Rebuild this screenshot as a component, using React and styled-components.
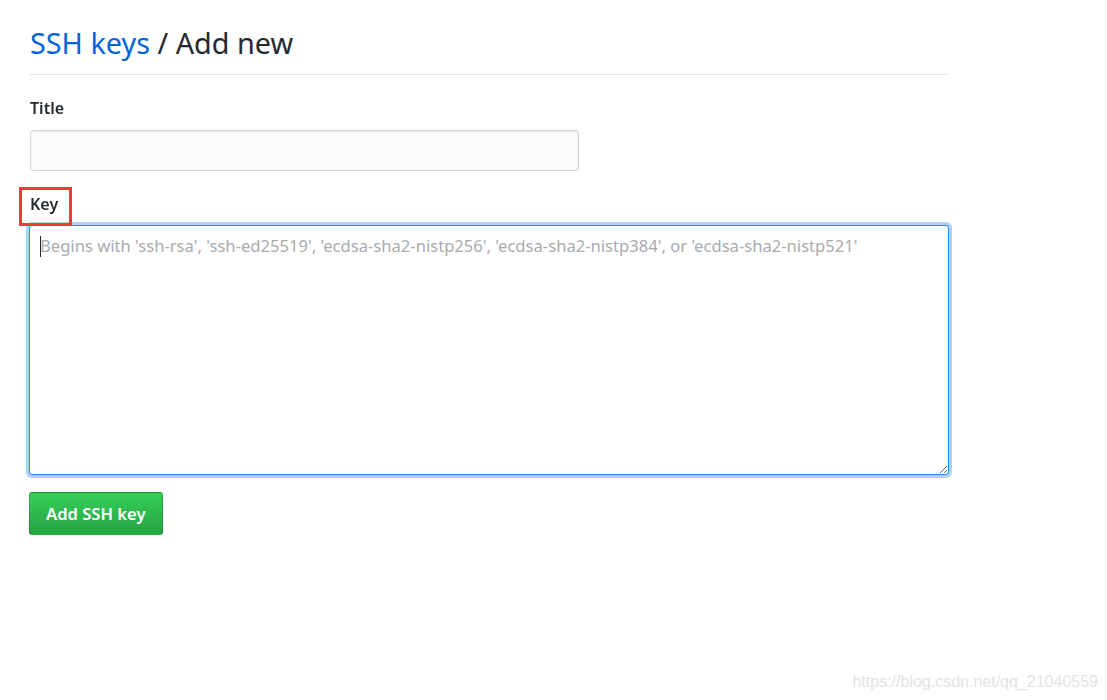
import React from 'react'
import styled, { createGlobalStyle } from 'styled-components'

const GlobalStyle = createGlobalStyle`
  html, body {
    margin: 0;
    padding: 0;
    background: #fff;
  }
  body {
    font-family: "Noto Sans", "Open Sans", "Liberation Sans", sans-serif;
    color: #24292e;
  }
`

const Page = styled.div`
  position: relative;
  width: 1107px;
  height: 700px;
  overflow: hidden;
`

const Content = styled.div`
  width: 918px;
  padding: 22px 0 0 30px;
`

const Heading = styled.h2`
  margin: 0;
  padding-bottom: 10px;
  font-size: 28.8px;
  font-weight: 400;
  line-height: 42px;
  border-bottom: 1px solid #e1e4e8;
  color: #24292e;
  a {
    color: #0366d6;
    text-decoration: none;
  }
`

const Group = styled.div`
  margin-top: ${props => props.top}px;
`

const Label = styled.label`
  position: relative;
  z-index: 1;
  display: inline-block;
  font-size: 16px;
  font-weight: 600;
  line-height: 22px;
  margin-bottom: ${props => props.gap}px;
  padding: ${props => (props.marked ? '3px 11px 8px 8px' : '0')};
  margin-left: ${props => (props.marked ? '-11px' : '0')};
  border: ${props => (props.marked ? '3px solid #f03a3a' : 'none')};
`

const TextInput = styled.input`
  display: block;
  box-sizing: border-box;
  width: 549px;
  height: 41px;
  padding: 6px 8px;
  font-size: 16px;
  font-family: inherit;
  background: #fafbfc;
  border: 1px solid #d1d5da;
  border-radius: 3px;
  box-shadow: inset 0 1px 2px rgba(27, 31, 35, 0.075);
  outline: none;
`

const AreaWrap = styled.div`
  position: relative;
`

const KeyArea = styled.textarea`
  display: block;
  box-sizing: border-box;
  width: 920px;
  height: 250px;
  margin-left: -1px;
  padding: 9px 10px;
  font-size: 16.6px;
  line-height: 22px;
  font-family: inherit;
  color: #24292e;
  background: #fff;
  border: 1px solid #2188ff;
  border-radius: 3px;
  box-shadow: 0 0 0 3px rgba(3, 102, 214, 0.3);
  outline: none;
  resize: both;
  caret-color: transparent;
  &::placeholder {
    color: #a8acb0;
  }
`

const Caret = styled.span`
  position: absolute;
  left: 10px;
  top: 11px;
  width: 1px;
  height: 21px;
  background: #24292e;
  pointer-events: none;
`

const SubmitButton = styled.button`
  display: block;
  margin-top: 17px;
  margin-left: -1px;
  height: 43px;
  padding: 0 16px;
  font-family: inherit;
  font-size: 16.6px;
  font-weight: 600;
  color: #fff;
  background-image: linear-gradient(-180deg, #34d058 0%, #28a745 90%);
  border: 1px solid rgba(27, 31, 35, 0.2);
  border-radius: 3px;
  cursor: pointer;
`

const Watermark = styled.div`
  position: absolute;
  right: 9px;
  bottom: 9px;
  font-family: "Liberation Sans", Arial, sans-serif;
  font-size: 16px;
  color: #e3e3e3;
`

export default function App() {
  return (
    <Page>
      <GlobalStyle />
      <Content>
        <Heading>
          <a href="#keys">SSH keys</a> / Add new
        </Heading>
        <Group top={22}>
          <Label gap={11}>Title</Label>
          <TextInput type="text" />
        </Group>
        <Group top={16}>
          <Label gap={-1} marked>Key</Label>
          <AreaWrap>
            <KeyArea
              autoFocus
              placeholder="Begins with 'ssh-rsa', 'ssh-ed25519', 'ecdsa-sha2-nistp256', 'ecdsa-sha2-nistp384', or 'ecdsa-sha2-nistp521'"
            />
            <Caret />
          </AreaWrap>
        </Group>
        <SubmitButton type="button">Add SSH key</SubmitButton>
      </Content>
      <Watermark>https://blog.csdn.net/qq_21040559</Watermark>
    </Page>
  )
}
